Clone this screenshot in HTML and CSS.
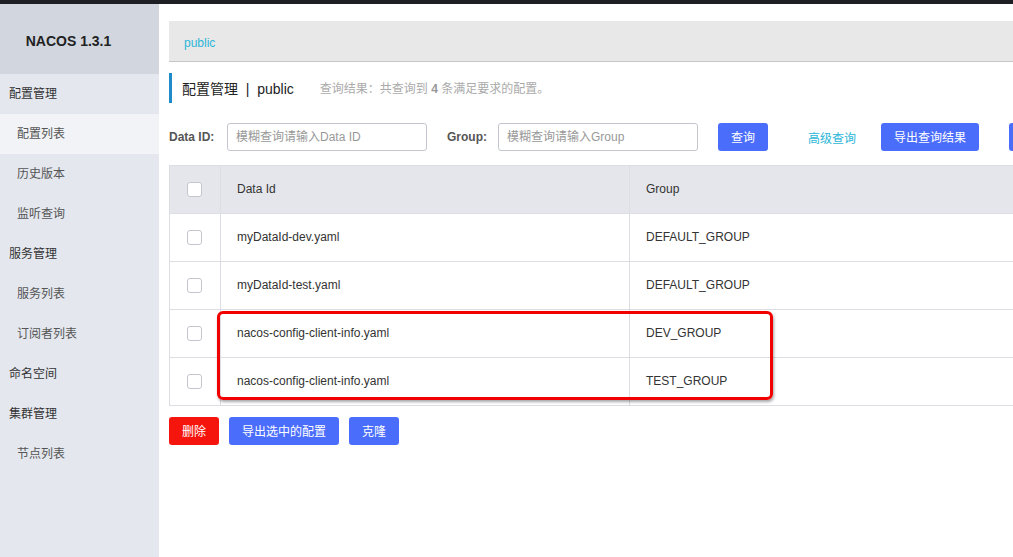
FILE: index.html
```html
<!DOCTYPE html>
<html lang="zh">
<head>
<meta charset="utf-8">
<title>Nacos</title>
<link rel="stylesheet" href="styles.css">
</head>
<body>
<div class="topbar"></div>
<div class="layout">
  <aside class="sidebar">
    <div class="logo">NACOS 1.3.1</div>
    <nav class="menu">
      <div class="menu-group">配置管理</div>
      <div class="menu-item active">配置列表</div>
      <div class="menu-item">历史版本</div>
      <div class="menu-item">监听查询</div>
      <div class="menu-group">服务管理</div>
      <div class="menu-item">服务列表</div>
      <div class="menu-item">订阅者列表</div>
      <div class="menu-group">命名空间</div>
      <div class="menu-group">集群管理</div>
      <div class="menu-item">节点列表</div>
    </nav>
  </aside>
  <main class="main">
    <div class="breadcrumb"><span class="ns">public</span></div>
    <div class="title-row">
      <span class="title">配置管理 &nbsp;|&nbsp; public</span>
      <span class="summary">查询结果：共查询到 <b>4</b> 条满足要求的配置。</span>
    </div>
    <div class="search-row">
      <label class="lbl">Data ID:</label>
      <div class="input">模糊查询请输入Data ID</div>
      <label class="lbl lbl-group">Group:</label>
      <div class="input">模糊查询请输入Group</div>
      <button class="btn btn-query">查询</button>
      <a class="link">高级查询</a>
      <button class="btn btn-export">导出查询结果</button>
      <button class="btn btn-more" aria-label="导入配置"></button>
    </div>
    <div class="table-wrap">
      <table class="table">
        <thead>
          <tr><th class="c-check"><span class="cb"></span></th><th class="c-id">Data Id</th><th class="c-group">Group</th></tr>
        </thead>
        <tbody>
          <tr><td class="c-check"><span class="cb"></span></td><td>myDataId-dev.yaml</td><td>DEFAULT_GROUP</td></tr>
          <tr><td class="c-check"><span class="cb"></span></td><td>myDataId-test.yaml</td><td>DEFAULT_GROUP</td></tr>
          <tr><td class="c-check"><span class="cb"></span></td><td>nacos-config-client-info.yaml</td><td>DEV_GROUP</td></tr>
          <tr><td class="c-check"><span class="cb"></span></td><td>nacos-config-client-info.yaml</td><td>TEST_GROUP</td></tr>
        </tbody>
      </table>
      <div class="highlight"></div>
    </div>
    <div class="actions">
      <button class="btn btn-danger">删除</button>
      <button class="btn btn-export-sel">导出选中的配置</button>
      <button class="btn btn-clone">克隆</button>
    </div>
  </main>
</div>
</body>
</html>
```

FILE: styles.css
```css
* { box-sizing: border-box; }
html, body { margin: 0; padding: 0; }
body {
  width: 1013px;
  height: 557px;
  overflow: hidden;
  font-family: "Liberation Sans", "Noto Sans CJK SC", Arial, sans-serif;
  font-size: 12px;
  color: #333;
  background: #fff;
}
.topbar { height: 4px; background: #1d1f25; }
.layout { display: flex; height: 553px; }
.sidebar {
  width: 159px;
  flex: none;
  background: #e4e7ee;
}
.logo {
  height: 70px;
  background: #d1d6df;
  display: flex;
  align-items: center;
  justify-content: center;
  font-weight: bold;
  font-size: 14px;
  color: #222;
  padding: 3px 22px 0 0;
}
.menu-group, .menu-item {
  height: 40px;
  line-height: 40px;
  font-size: 12px;
  color: #333;
}
.menu-group { padding-left: 9px; }
.menu-item { padding-left: 17px; color: #555; }
.menu-item.active { background: #f1f3f6; }
.main {
  flex: none;
  width: 1200px;
  padding: 17px 0 0 10px;
}
.breadcrumb {
  height: 41px;
  background: #e8e8e8;
  border-bottom: 1px solid #c6c6c6;
  display: flex;
  align-items: center;
  padding-left: 15px;
  padding-top: 3px;
}
.ns { color: #2cb6d8; font-size: 12px; }
.title-row {
  margin-top: 11px;
  height: 30px;
  border-left: 3px solid #1f8bc9;
  display: flex;
  align-items: center;
  padding-left: 10px;
  padding-bottom: 1px;
}
.title { font-size: 14px; color: #222; }
.summary { margin-left: 26px; color: #aaa; font-size: 12px; }
.summary b { color: #999; }
.search-row {
  margin-top: 20px;
  height: 28px;
  display: flex;
  align-items: center;
}
.lbl { font-weight: bold; color: #555; font-size: 12px; width: 58px; }
.lbl-group { width: 51px; margin-left: 20px; }
.input {
  width: 200px;
  height: 28px;
  border: 1px solid #c4c6cf;
  border-radius: 3px;
  color: #999;
  line-height: 26px;
  padding-left: 8px;
}
.btn {
  height: 28px;
  border: none;
  border-radius: 3px;
  background: #4b6dfc;
  color: #fff;
  font-family: inherit;
  font-size: 12px;
  padding: 0 0 2px 0;
}
.btn-query { width: 50px; margin-left: 20px; }
.link { color: #2cb6d8; margin-left: 40px; }
.btn-export { width: 98px; margin-left: 25px; }
.btn-more { width: 80px; margin-left: 30px; }
.table-wrap { position: relative; margin-top: 14px; }
.table {
  border-collapse: collapse;
  width: 1100px;
  font-size: 12px;
  color: #333;
}
.table th, .table td {
  height: 48px;
  border: 1px solid #dcdee3;
  text-align: left;
  font-weight: normal;
  padding: 0 0 1px 16px;
}
.table th { background: #e5e6eb; color: #333; }
.table .c-check { width: 51px; padding: 0 0 0 17px; }
.table .c-id { width: 409px; }
.cb {
  display: block;
  width: 15px;
  height: 15px;
  border: 1px solid #c4c6cf;
  border-radius: 3px;
  background: #fff;
}
.highlight {
  position: absolute;
  left: 48px;
  top: 146px;
  width: 556px;
  height: 89px;
  border: 3px solid #f20000;
  border-radius: 6px;
  box-shadow: 1px 2px 3px rgba(0, 0, 0, 0.35);
}
.actions {
  margin-top: 11px;
  display: flex;
  gap: 10px;
}
.btn-danger { background: #f5150c; width: 50px; }
.btn-export-sel { width: 110px; }
.btn-clone { width: 50px; }
```
